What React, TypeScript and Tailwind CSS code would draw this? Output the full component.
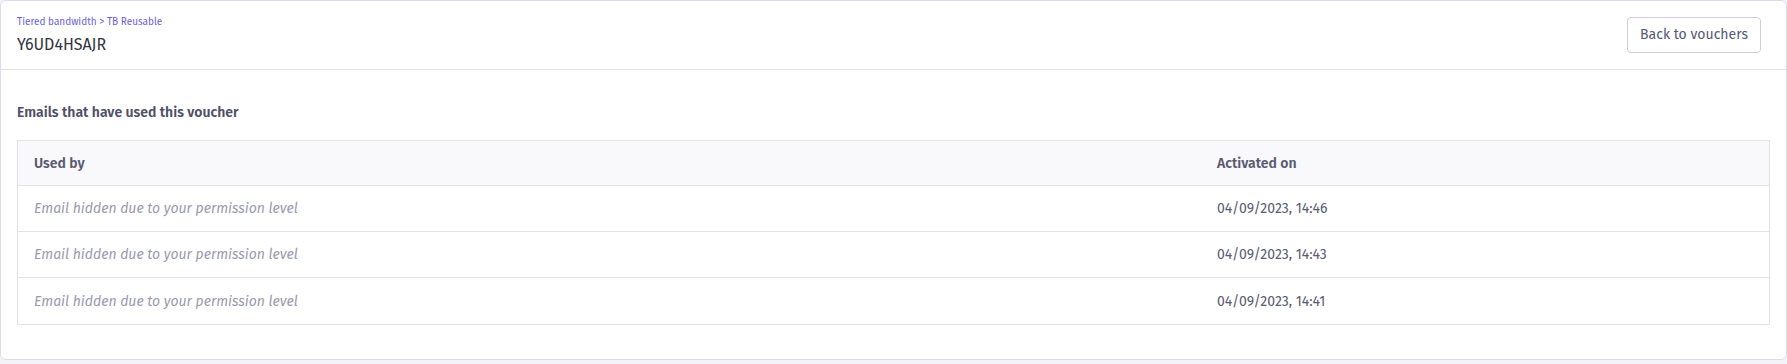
import React from 'react';

const rows = [
  { date: '04/09/2023, 14:46' },
  { date: '04/09/2023, 14:43' },
  { date: '04/09/2023, 14:41' },
];

const font = { fontFamily: '"Fira Sans", Roboto, "Noto Sans", sans-serif' };

export default function App() {
  return (
    <div className="w-full h-[364px] bg-[#f4f4f8]" style={font}>
      <div className="h-[360px] bg-white border border-[#dcdaea] rounded-md flex flex-col">
        {/* Header */}
        <div className="h-[69px] border-b border-[#dedde8] flex items-center justify-between pl-[16px] pr-[25px]">
          <div className="flex flex-col">
            <div className="text-[10px] leading-[14px] text-[#6b5fdc] mt-[-1px]">
              Tiered bandwidth &gt; TB Reusable
            </div>
            <div className="text-[16px] leading-[20px] text-[#34343f] mt-[6px]">Y6UD4HSAJR</div>
          </div>
          <button className="h-[36px] w-[134px] border border-[#cfcde0] rounded-[4px] text-[14px] text-[#545a78] bg-white mt-[-1px]">
            Back to vouchers
          </button>
        </div>

        {/* Body */}
        <div className="px-[16px] pt-[33px]">
          <h3 className="text-[14px] leading-[20px] font-semibold text-[#4f4f68]">
            Emails that have used this voucher
          </h3>
          <div className="mt-[17px] border border-[#e3e2ec]">
            <div className="grid grid-cols-[1183px_1fr] h-[45px] items-center bg-[#f9f9fc] border-b border-[#e3e2ec] text-[14px] font-semibold text-[#5a5a72]">
              <div className="pl-[16px]">Used by</div>
              <div className="pl-[16px]">Activated on</div>
            </div>
            {rows.map((r, i) => (
              <div
                key={i}
                className={`grid grid-cols-[1183px_1fr] h-[46px] items-center text-[14px] ${i < rows.length - 1 ? 'border-b border-[#e3e2ec]' : 'h-[45px]'}`}
              >
                <div className="pl-[16px] italic text-[#9a9aae]">Email hidden due to your permission level</div>
                <div className="pl-[16px] text-[#5a5c72]">{r.date}</div>
              </div>
            ))}
          </div>
        </div>
      </div>
    </div>
  );
}
